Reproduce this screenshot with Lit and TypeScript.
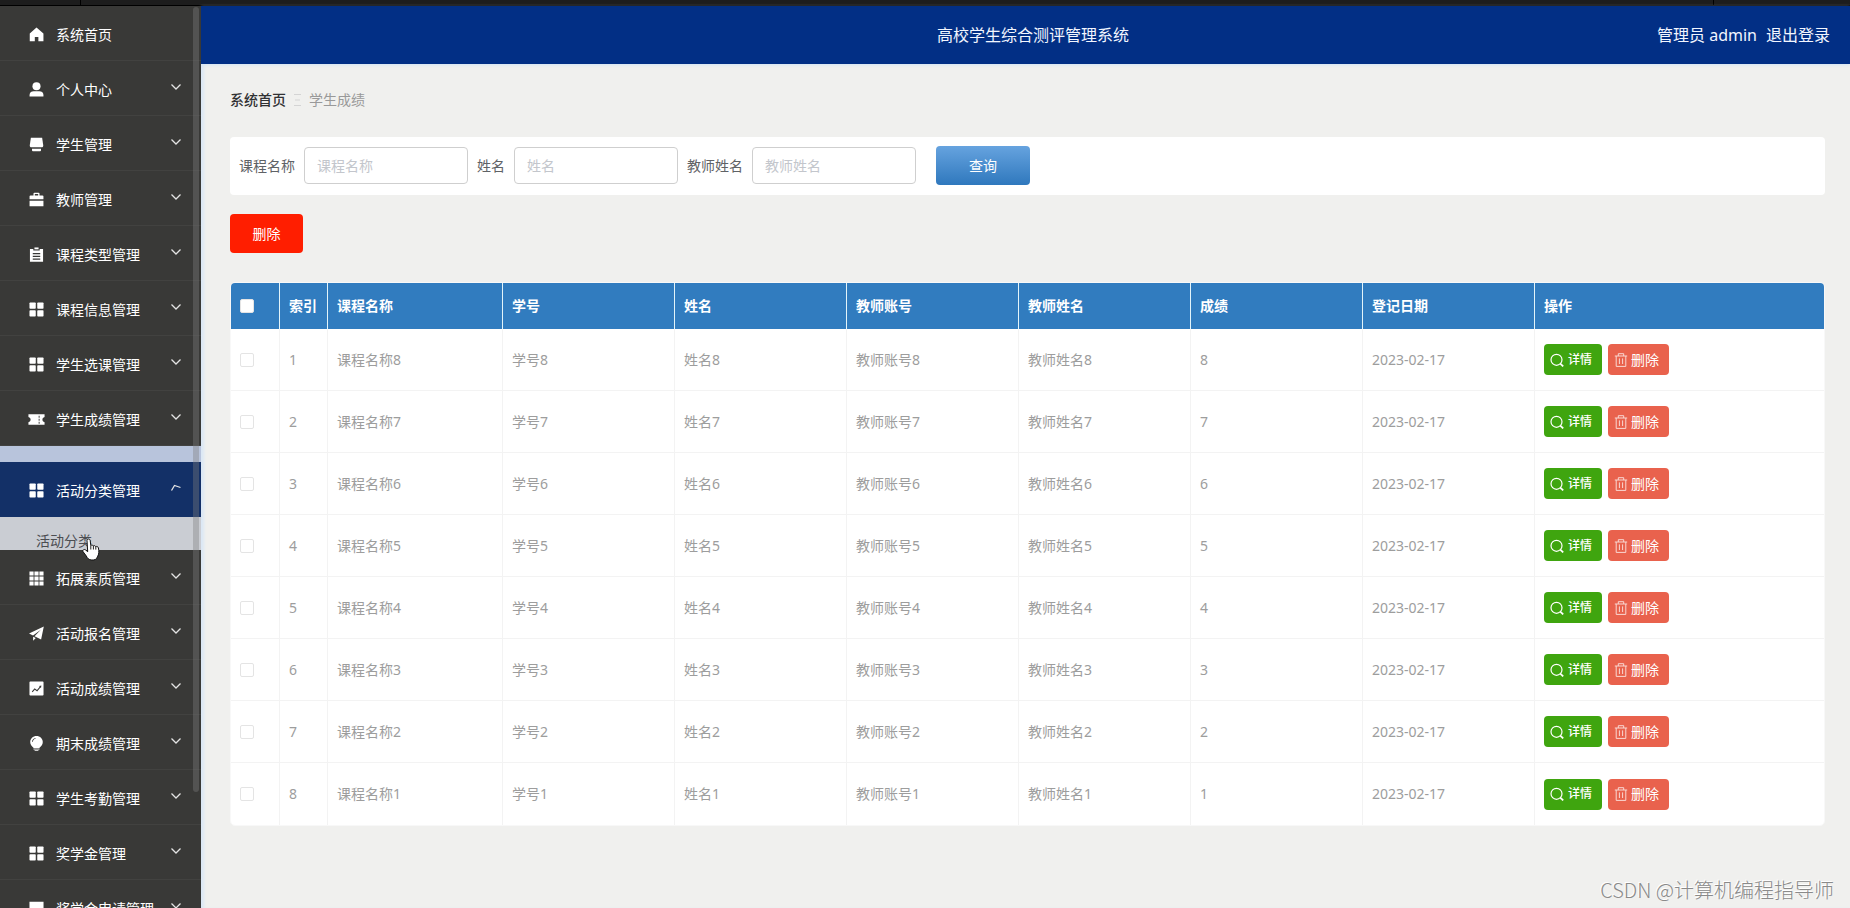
import { LitElement, html, svg, css } from "lit";
import { customElement, property, state } from "lit/decorators.js";
import { classMap } from "lit/directives/class-map.js";

const ICONS: Record<string, unknown> = {
  home: svg`<path d="M8 .6 15.4 7v8.2H10V10.600H6.200v4.600H.8V7z"/>`,
  user: svg`<circle cx="8" cy="4.500" r="4.300"/><path d="M.6 15.400v-1.600C.6 11 2.800 9.900 5 9.900h6c2.200 0 4.400 1.100 4.400 3.900v1.600z"/>`,
  shop: svg`<path d="M2 .8h12l1.200 8.200c0 1.300-.8 2-2 2H2.800C1.600 11 .8 10.300.8 9z"/><path d="M3.200 12.400h9.600v1.800c0 .7-.4 1.100-1 1.100H4.200c-.6 0-1-.4-1-1.100z"/>`,
  bag: svg`<path fill-rule="evenodd" d="M4.800 3.600V1.700c0-.6.4-1 1-1h4.400c.6 0 1 .4 1 1v1.900h3.200c.6 0 1 .4 1 1v3.200H.6V4.600c0-.6.4-1 1-1zm1.400 0h3.600V2H6.200zM.6 9.200h14.800v6H.6z"/>`,
  order: svg`<path fill-rule="evenodd" d="M1 2h3.600v1.600h6.800V2H15v13.600H1zm3 4.400v1.200h8V6.400zm0 3v1.200h8V9.400zm0 2.900v1.200h8v-1.200z"/><path d="M5.800.5h4.400v2H5.800z"/>`,
  menu: svg`<rect x=".5" y=".5" width="6.700" height="6.700" rx=".8"/><rect x="8.800" y=".5" width="6.700" height="6.700" rx=".8"/><rect x=".5" y="8.800" width="6.700" height="6.700" rx=".8"/><rect x="8.800" y="8.800" width="6.700" height="6.700" rx=".8"/>`,
  ticket: svg`<path fill-rule="evenodd" d="M-.6 2.400H16.600v2.800c-1.500.4-2.300 1.400-2.300 2.800s.8 2.400 2.300 2.800v2.800H-.6v-2.800C.9 10.400 1.700 9.400 1.700 8S.9 5.600-.6 5.200zM10.300 4v2h1V4zm0 3.200v2h1v-2zm0 3.200v2h1v-2z"/>`,
  grid: svg`<path d="M.5.500h4.400v4.400H.5zM5.800.5h4.400v4.400H5.800zM11.100.5h4.400v4.400h-4.400zM.5 5.800h4.400v4.400H.5zM5.800 5.800h4.400v4.400H5.800zM11.100 5.800h4.400v4.400h-4.400zM.5 11.100h4.400v4.400H.5zM5.800 11.100h4.400v4.400H5.800zM11.100 11.100h4.400v4.400h-4.400z"/>`,
  send: svg`<path d="M15.800.4 0 8l4.300 2.200L12.600 4 5.900 11l7 3.400zM4.400 11.400v4.400l2.800-3z"/>`,
  chart: svg`<path fill-rule="evenodd" d="M1.400.5h13.200c.5 0 .9.4.9.9v13.200c0 .5-.4.900-.9.900H1.400c-.5 0-.9-.4-.9-.900V1.400c0-.5.4-.9.900-.9zM3 11.300l.8.700 2.400-2.800 2.500 1.900 3.500-4.200.6.500.4-2.600-2.500.6.700.6-2.900 3.500-2.500-1.900z"/>`,
  bulb: svg`<path fill-rule="evenodd" d="M8 0c3.800 0 6.700 2.800 6.700 6.500 0 2.700-1.500 4.600-3.500 6v.5H4.800v-.5c-2-1.400-3.500-3.300-3.500-6C1.300 2.800 4.200 0 8 0zM7 2C4.800 2.300 3.300 3.800 3.200 6.200h.9C4.200 4.300 5.300 3.100 7 2.800z"/><path d="M4.800 13.600h6.400v.9H4.800zM6 15.100h4v.9H6z"/>`,
  chat: svg`<path d="M.5.800h15v10.800H9.500l-4 3.600v-3.600h-5z"/>`,
};

type Entry = { icon: string; label: string; children?: string[] };

const MENU: Entry[] = [
  { icon: "user", label: "个人中心" },
  { icon: "shop", label: "学生管理" },
  { icon: "bag", label: "教师管理" },
  { icon: "order", label: "课程类型管理" },
  { icon: "menu", label: "课程信息管理" },
  { icon: "menu", label: "学生选课管理" },
  { icon: "ticket", label: "学生成绩管理" },
  { icon: "menu", label: "活动分类管理", children: ["活动分类"] },
  { icon: "grid", label: "拓展素质管理" },
  { icon: "send", label: "活动报名管理" },
  { icon: "chart", label: "活动成绩管理" },
  { icon: "bulb", label: "期末成绩管理" },
  { icon: "menu", label: "学生考勤管理" },
  { icon: "menu", label: "奖学金管理" },
  { icon: "chat", label: "奖学金申请管理" },
];

const base = css`
  * {
    box-sizing: border-box;
  }
  button,
  input {
    font: inherit;
    margin: 0;
  }
  button {
    cursor: pointer;
  }
  a {
    color: inherit;
    text-decoration: none;
  }
`;

@customElement("side-menu")
export class SideMenu extends LitElement {
  @state() private open = "活动分类管理";

  static styles = [
    base,
    css`
      :host {
        display: block;
        position: relative;
        overflow: hidden;
        background: #393937;
        color: #fff;
      }
      .list {
        list-style: none;
        margin: 0;
        padding: 0;
      }
      .entry {
        display: flex;
        align-items: center;
        gap: 12px;
        width: 100%;
        height: 55px;
        padding: 3px 19px 0 29px;
        border: 0;
        border-bottom: 1px solid #424240;
        background: none;
        color: inherit;
        text-align: left;
        white-space: nowrap;
      }
      .opened {
        border-top: 16px solid #b8c4dc;
      }
      .opened .entry {
        background: #133067;
        border-bottom-color: #133067;
      }
      .icon {
        width: 15px;
        height: 15px;
        fill: currentColor;
        overflow: visible;
        flex: none;
      }
      .label {
        flex: 1;
      }
      .arrow {
        width: 12px;
        height: 12px;
        margin-bottom: 5px;
        fill: none;
        stroke: #e4e4e4;
        stroke-width: 1.300;
        flex: none;
      }
      .sub {
        list-style: none;
        margin: 0;
        height: 33px;
        padding: 15px 0 0 36px;
        background: #cacdd3;
        color: #4c4e52;
        line-height: 17px;
      }
      .thumb {
        position: absolute;
        top: 1px;
        right: 2px;
        width: 6px;
        height: 87%;
        border-radius: 3px;
        background: rgba(125, 125, 125, 0.38);
      }
      .hand {
        position: absolute;
        left: 82px;
        top: 532px;
        width: 19px;
        height: 23px;
      }
    `,
  ];

  private toggle(label: string) {
    this.open = this.open === label ? "" : label;
  }

  render() {
    return html`
      <nav>
        <ul class="list">
          <li>
            <a class="entry" href="#home">
              <svg class="icon" viewBox="0 0 16 16">${ICONS.home}</svg>
              <span class="label">系统首页</span>
            </a>
          </li>
          ${MENU.map((m) => {
            const opened = !!m.children && this.open === m.label;
            return html`<li class=${classMap({ opened })}>
              <button class="entry" aria-expanded=${opened ? "true" : "false"} @click=${() => this.toggle(m.label)}>
                <svg class="icon" viewBox="0 0 16 16">${ICONS[m.icon]}</svg>
                <span class="label">${m.label}</span>
                <svg class="arrow" viewBox="0 0 12 12">
                  <path d=${opened ? "M1.500 8.500 4.500 3.500l6 2" : "M1.500 3.500 6 8l4.500-4.500"} />
                </svg>
              </button>
              ${opened
                ? html`<ul class="sub">
                    ${m.children!.map((c) => html`<li><a href="#sub">${c}</a></li>`)}
                  </ul>`
                : ""}
            </li>`;
          })}
        </ul>
      </nav>
      <div class="thumb"></div>
      <svg class="hand" viewBox="0 0 19 23">
        <path
          d="M5 2.500c0-2 3-2 3.200 0l.6 5c.8-.7 2-.5 2.500.4.8-.6 2-.3 2.300.7 1-.4 2.600 0 2.800 1.200.8 3.400.6 6.600-1 9-.6 2.500-3 3.500-5.600 3.200-3 0-4.500-2-5.500-4L1 13.600c-.8-1.800 1.400-2.800 2.700-1.600l2 1.700z"
          fill="#fff"
          stroke="#111"
          stroke-width="1"
        />
        <path d="M8.800 7.500v4M11.400 8v3.500M13.800 9v2.600" stroke="#222" fill="none" />
      </svg>
    `;
  }
}

@customElement("score-table")
export class ScoreTable extends LitElement {
  @property({ attribute: false }) rows: number[] = [];

  static styles = [
    base,
    css`
      :host {
        display: block;
        border: 1px solid #f8f8f8;
        border-radius: 5px;
        overflow: hidden;
        background: #fff;
      }
      .table {
        width: 100%;
        table-layout: fixed;
        border-collapse: separate;
        border-spacing: 0;
      }
      .pick {
        width: 49px;
      }
      .narrow {
        width: 48px;
      }
      .course {
        width: 175px;
      }
      .ops {
        width: 289px;
      }
      th,
      td {
        padding: 0 10px 0 9px;
        text-align: left;
        line-height: 20px;
        white-space: nowrap;
      }
      th {
        height: 46px;
        background: #317cbf;
        color: #fff;
        font-weight: 700;
        border-right: 1px solid #e2f4fa;
      }
      td {
        height: 62px;
        color: #9d9d9d;
        border-right: 1px solid #f3f3f3;
        border-bottom: 1px solid #f3f3f3;
      }
      th:last-child,
      td:last-child {
        border-right: 0;
      }
      tr:last-child td {
        border-bottom: 0;
      }
      .check {
        appearance: none;
        display: block;
        width: 14px;
        height: 14px;
        border: 1px solid #e4e4e4;
        border-radius: 2px;
        background: #fff;
      }
      .acts {
        display: flex;
        align-items: baseline;
        gap: 6px;
      }
      .btn {
        display: flex;
        align-items: center;
        height: 31px;
        padding: 0 10px 0 6px;
        border: 0;
        border-radius: 4px;
        color: #fff;
        gap: 4px;
      }
      .view {
        background: #3fa50f;
        font-size: 12px;
        font-weight: 500;
      }
      .del {
        background: #e9624d;
        gap: 3px;
      }
      .glyph {
        width: 14px;
        height: 14px;
        fill: none;
        stroke: currentColor;
      }
      .del .glyph {
        opacity: 0.75;
      }
    `,
  ];

  render() {
    return html`<table class="table">
      <colgroup>
        <col class="pick" />
        <col class="narrow" />
        <col class="course" />
        <col />
        <col />
        <col />
        <col />
        <col />
        <col />
        <col class="ops" />
      </colgroup>
      <thead>
        <tr>
          <th><input class="check" type="checkbox" aria-label="全选" /></th>
          ${["索引", "课程名称", "学号", "姓名", "教师账号", "教师姓名", "成绩", "登记日期", "操作"].map(
            (h) => html`<th>${h}</th>`
          )}
        </tr>
      </thead>
      <tbody>
        ${this.rows.map(
          (n, i) => html`<tr>
            <td><input class="check" type="checkbox" aria-label=${"选择" + (i + 1)} /></td>
            <td>${i + 1}</td>
            <td>课程名称${n}</td>
            <td>学号${n}</td>
            <td>姓名${n}</td>
            <td>教师账号${n}</td>
            <td>教师姓名${n}</td>
            <td>${n}</td>
            <td>2023-02-17</td>
            <td>
              <div class="acts">
                <button class="btn view">
                  <svg class="glyph" viewBox="0 0 14 14">
                    <circle cx="6.500" cy="6.800" r="5.500" stroke-width="1.200" />
                    <path d="m10.300 10.700 2.900 2.700" stroke-width="1.800" />
                  </svg>
                  详情
                </button>
                <button class="btn del">
                  <svg class="glyph" viewBox="0 0 14 14">
                    <path d="M.8 3h12.400M4.300 3V.700h5.400V3M2.200 3v10.400h9.600V3M5.400 5.400v5.600M8.600 5.400v5.600" />
                  </svg>
                  删除
                </button>
              </div>
            </td>
          </tr>`
        )}
      </tbody>
    </table>`;
  }
}

@customElement("app-root")
export class AppRoot extends LitElement {
  static styles = [
    base,
    css`
      :host {
        display: flex;
        flex-direction: column;
        position: relative;
        height: 100vh;
        overflow: hidden;
        background: #f0f0ee;
        font: 14px/20px "Noto Sans", "Noto Sans CJK SC", sans-serif;
      }
      .strip {
        display: flex;
        justify-content: space-between;
        height: 6px;
        padding: 0 136px 0 80px;
        background: #1d1d1d;
        border-bottom: 1px solid #000;
        flex: none;
      }
      .tick {
        width: 1px;
        background: #000;
      }
      .shell {
        flex: 1;
        min-height: 0;
        display: grid;
        grid-template-columns: 201px 1fr;
      }
      .main {
        display: flex;
        flex-direction: column;
        min-width: 0;
        box-shadow: inset 4px 0 3px -1px #dbe8f5;
      }
      .top {
        display: grid;
        grid-template-columns: 1fr auto 1fr;
        align-items: center;
        height: 58px;
        padding: 0 20px 0 35px;
        background: #022f85;
        color: #f2f6ff;
        font-size: 16px;
        box-shadow: 0 1px 3px #d3e4f5;
        flex: none;
      }
      .title {
        grid-column: 2;
        margin: 0;
        font-size: 16px;
        font-weight: 400;
      }
      .user {
        display: flex;
        justify-content: flex-end;
        gap: 9px;
      }
      .body {
        padding: 26px 25px 0 29px;
      }
      .crumbs {
        display: flex;
        align-items: center;
        gap: 8px;
        color: #999;
      }
      .first {
        color: #303133;
        font-weight: 500;
      }
      .sep {
        width: 7px;
        height: 12px;
        stroke: #d4d4d4;
      }
      .search {
        display: flex;
        align-items: center;
        gap: 9px;
        height: 58px;
        margin-top: 27px;
        padding: 0 9px 1px;
        border-radius: 4px;
        background: #fff;
        color: #5f6266;
      }
      .field {
        width: 164px;
        height: 37px;
        padding: 0 12px;
        border: 1px solid #cfcfcf;
        border-radius: 4px;
        background: #fff;
        color: #606266;
      }
      .field::placeholder {
        color: #c3c6cc;
        opacity: 1;
      }
      .query,
      .remove {
        height: 39px;
        border: 0;
        border-radius: 4px;
        color: #fff;
      }
      .query {
        width: 94px;
        margin-left: 11px;
        background: linear-gradient(#66a3df, #2f78bd);
      }
      .remove {
        display: block;
        width: 73px;
        margin: 19px 0 29px;
        background: #ff1e00;
      }
      .mark {
        position: absolute;
        right: 16px;
        bottom: 4px;
        color: #8a8a8a;
        font-size: 20px;
        line-height: 28px;
        font-family: "Noto Sans CJK SC", sans-serif;
        font-weight: 300;
        text-shadow: -1px -1px 0 #fff;
      }
    `,
  ];

  render() {
    return html`
      <div class="strip"><span class="tick"></span><span class="tick"></span></div>
      <div class="shell">
        <side-menu></side-menu>
        <div class="main">
          <header class="top">
            <h1 class="title">高校学生综合测评管理系统</h1>
            <div class="user"><span>管理员 admin</span><a href="#logout">退出登录</a></div>
          </header>
          <main class="body">
            <div class="crumbs">
              <a class="first" href="#home">系统首页</a>
              <svg class="sep" viewBox="0 0 7 12"><path d="M0 .5h7M1 6h5M0 11.500h7" /></svg>
              <span>学生成绩</span>
            </div>
            <form class="search" @submit=${(e: Event) => e.preventDefault()}>
              <label for="course">课程名称</label>
              <input class="field" id="course" placeholder="课程名称" />
              <label for="name">姓名</label>
              <input class="field" id="name" placeholder="姓名" />
              <label for="teacher">教师姓名</label>
              <input class="field" id="teacher" placeholder="教师姓名" />
              <button class="query">查询</button>
            </form>
            <button class="remove">删除</button>
            <score-table .rows=${[8, 7, 6, 5, 4, 3, 2, 1]}></score-table>
          </main>
        </div>
      </div>
      <div class="mark">CSDN @计算机编程指导师</div>
    `;
  }
}
